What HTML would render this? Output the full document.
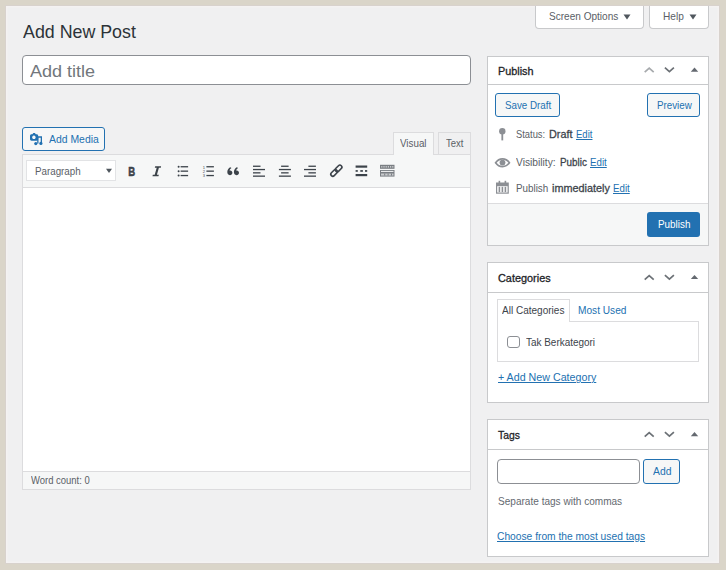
<!DOCTYPE html>
<html><head><meta charset="utf-8"><style>
html,body{margin:0;padding:0;}
body{width:726px;height:570px;position:relative;overflow:hidden;background:#dad5c9;font-family:"Liberation Sans",sans-serif;}
.t{position:absolute;white-space:nowrap;line-height:1;transform-origin:0 0;}
#w{position:absolute;left:0;top:0;width:726px;height:570px;}
</style></head><body><div id="w">
<div style="position:absolute;left:4.5px;top:4.5px;width:715.5px;height:559.5px;background:#f0f0f1;border:1px solid #d8d2cd;box-shadow:inset 0 0 0 1.5px #f4f2f2;box-sizing:border-box;"></div>
<div style="position:absolute;left:535px;top:6px;width:109px;height:23px;background:#fff;border:1px solid #c8c9cb;border-top:none;border-radius:0 0 4px 4px;box-sizing:border-box;"></div>
<div class="t" style="left:548.90px;top:11.00px;font-size:11.2px;color:#5a6066;font-weight:normal;transform:scaleX(0.8987);">Screen Options</div>
<div style="position:absolute;left:649px;top:6px;width:60px;height:23px;background:#fff;border:1px solid #c8c9cb;border-top:none;border-radius:0 0 4px 4px;box-sizing:border-box;"></div>
<div class="t" style="left:663.00px;top:11.00px;font-size:11.2px;color:#5a6066;font-weight:normal;transform:scaleX(0.9037);">Help</div>
<svg style="position:absolute;left:622px;top:13px" width="10" height="8"><path d="M1.5 1.5h7l-3.5 5z" fill="#50575e"/></svg>
<svg style="position:absolute;left:688px;top:13px" width="10" height="8"><path d="M1.5 1.5h7l-3.5 5z" fill="#50575e"/></svg>
<div class="t" style="left:22.50px;top:23.00px;font-size:18.5px;color:#2c3338;font-weight:normal;transform:scaleX(0.9625);">Add New Post</div>
<div style="position:absolute;left:22px;top:55px;width:449px;height:30px;background:#fff;border:1px solid #8c8f94;border-radius:4px;box-sizing:border-box;"></div>
<div class="t" style="left:30.30px;top:63.00px;font-size:17.2px;color:#72777c;font-weight:normal;transform:scaleX(1.0486);">Add title</div>
<div style="position:absolute;left:22px;top:127px;width:83px;height:24px;background:#f6f7f7;border:1px solid #2271b1;border-radius:3px;box-sizing:border-box;"></div>
<svg style="position:absolute;left:0;top:0" width="726" height="570">
<path fill="#2271b1" fill-rule="evenodd" d="M31.6 134.2h.8l.9-1.2h1.6l.9 1.2h.8c.9 0 1.6.7 1.6 1.6v3.3c0 .9-.7 1.6-1.6 1.6h-5c-.9 0-1.6-.7-1.6-1.6v-3.3c0-.9.7-1.6 1.6-1.6zM33.9 135.5a1.75 1.75 0 1 0 .01 0z"/>
<path fill="#2271b1" d="M37.2 136.2h4.8v7.2h-1.3v-5.7h-2.2v5.9h-1.3z"/>
<circle cx="35.8" cy="143.6" r="1.6" fill="#2271b1"/><circle cx="40.9" cy="143.4" r="1.6" fill="#2271b1"/>
</svg>
<div class="t" style="left:48.70px;top:134.00px;font-size:11.2px;color:#2271b1;font-weight:normal;transform:scaleX(0.9311);">Add Media</div>
<div style="position:absolute;left:393px;top:131.5px;width:41px;height:23px;background:#f6f7f7;border:1px solid #dcdcde;border-bottom:none;box-sizing:border-box;"></div>
<div class="t" style="left:400.30px;top:138.00px;font-size:11px;color:#5a6066;font-weight:normal;transform:scaleX(0.8906);">Visual</div>
<div style="position:absolute;left:438px;top:131.5px;width:33px;height:23px;background:#f0f0f1;border:1px solid #dcdcde;box-sizing:border-box;"></div>
<div class="t" style="left:445.80px;top:138.00px;font-size:11px;color:#5a6066;font-weight:normal;transform:scaleX(0.8620);">Text</div>
<div style="position:absolute;left:22px;top:154px;width:449px;height:336px;background:#fff;border:1px solid #dcdcde;box-sizing:border-box;"></div>
<div style="position:absolute;left:23px;top:155px;width:447px;height:32px;background:#f6f7f7;border-bottom:1px solid #dcdcde;"></div>
<div style="position:absolute;left:394px;top:153.5px;width:39px;height:2px;background:#f6f7f7;"></div>
<div style="position:absolute;left:26px;top:160px;width:90px;height:21px;background:#fff;border:1px solid #e2e3e5;box-sizing:border-box;"></div>
<div class="t" style="left:35.00px;top:166.00px;font-size:10.8px;color:#5a6066;font-weight:normal;transform:scaleX(0.9061);">Paragraph</div>
<svg style="position:absolute;left:105px;top:168px" width="8" height="6"><path d="M1 0.8h6l-3 4.2z" fill="#50575e"/></svg>
<div style="position:absolute;left:23px;top:471px;width:447px;height:18px;background:#f6f7f7;border-top:1px solid #dcdcde;box-sizing:border-box;"></div>
<div class="t" style="left:31.30px;top:475.00px;font-size:10.5px;color:#5a6066;font-weight:normal;transform:scaleX(0.9010);">Word count: 0</div>
<svg style="position:absolute;left:0;top:0" width="726" height="570">
<text x="128.2" y="175.9" font-family="Liberation Sans" font-weight="bold" font-size="13.6" textLength="6.9" lengthAdjust="spacingAndGlyphs" fill="#3c434a" stroke="#3c434a" stroke-width="0.55">B</text>
<path d="M155.2 166.2h5.9l-.3 1.5h-1.9l-2 7h1.9l-.3 1.5h-6l.3-1.5h1.9l2-7h-1.9z" fill="#3c434a"/>
<g fill="#3c434a">
<circle cx="178.6" cy="166.8" r="1"/><circle cx="178.6" cy="171.2" r="1"/><circle cx="178.6" cy="175.6" r="1"/>
<rect x="180.6" y="166.1" width="7.5" height="1.3"/><rect x="180.6" y="170.5" width="7.5" height="1.3"/><rect x="180.6" y="174.9" width="7.5" height="1.3"/>
<rect x="206.4" y="166.1" width="7.5" height="1.3"/><rect x="206.4" y="170.5" width="7.5" height="1.3"/><rect x="206.4" y="174.9" width="7.5" height="1.3"/>
</g>
<text x="202.8" y="168.6" font-family="Liberation Sans" font-size="4" fill="#3c434a">1</text>
<text x="202.8" y="173" font-family="Liberation Sans" font-size="4" fill="#3c434a">2</text>
<text x="202.8" y="177.4" font-family="Liberation Sans" font-size="4" fill="#3c434a">3</text>
<path d="M230.2 167.3c-1.6 1-2.9 2.6-2.9 4.8 0 1.8 1 3.1 2.6 3.1 1.4 0 2.5-1 2.5-2.4 0-1.3-.9-2.3-2.2-2.3-.3 0-.5 0-.7.1.3-1 1.1-1.9 2-2.5z M236.8 167.3c-1.6 1-2.9 2.6-2.9 4.8 0 1.8 1 3.1 2.6 3.1 1.4 0 2.5-1 2.5-2.4 0-1.3-.9-2.3-2.2-2.3-.3 0-.5 0-.7.1.3-1 1.1-1.9 2-2.5z" fill="#3c434a"/>
<g fill="#3c434a">
<rect x="253" y="165.6" width="7.5" height="1.3"/><rect x="253" y="168.9" width="12" height="1.3"/><rect x="253" y="172.2" width="7.5" height="1.3"/><rect x="253" y="175.5" width="12" height="1.3"/>
<rect x="281.1" y="165.6" width="7.5" height="1.3"/><rect x="278.9" y="168.9" width="12" height="1.3"/><rect x="281.1" y="172.2" width="7.5" height="1.3"/><rect x="278.9" y="175.5" width="12" height="1.3"/>
<rect x="308.4" y="165.6" width="7.5" height="1.3"/><rect x="304" y="168.9" width="12" height="1.3"/><rect x="308.4" y="172.2" width="7.5" height="1.3"/><rect x="304" y="175.5" width="12" height="1.3"/>
<rect x="355.6" y="165.5" width="11.6" height="2.2"/><rect x="355.6" y="170.1" width="2.2" height="1.7"/><rect x="360.3" y="170.1" width="2.6" height="1.7"/><rect x="365" y="170.1" width="2.2" height="1.7"/><rect x="355.6" y="174" width="11.6" height="2.2"/>
</g>
<g fill="none" stroke="#3c434a" stroke-width="1.6">
<rect x="-3.8" y="-2" width="7.6" height="4" rx="2" transform="translate(334.1 172.9) rotate(-45)"/>
<rect x="-3.8" y="-2" width="7.6" height="4" rx="2" transform="translate(338.6 168.4) rotate(-45)"/>
</g>
<g fill="#7a7e83">
<rect x="380" y="164.8" width="14.5" height="4"/><rect x="380" y="170" width="14.5" height="6.6"/>
</g>
<g fill="#c9cbcd">
<rect x="381.2" y="166" width="1.2" height="1.6"/><rect x="383.4" y="166" width="1.2" height="1.6"/><rect x="385.6" y="166" width="1.2" height="1.6"/><rect x="387.8" y="166" width="1.2" height="1.6"/><rect x="390" y="166" width="1.2" height="1.6"/><rect x="392.2" y="166" width="1.2" height="1.6"/>
<rect x="381" y="173.5" width="12.5" height="2.1"/>
</g>
<rect x="381" y="170.9" width="12.5" height="1" fill="#f6f7f7"/>
<g fill="#7a7e83"><rect x="384.2" y="173.5" width="1" height="2.1"/><rect x="387.6" y="173.5" width="1" height="2.1"/><rect x="391" y="173.5" width="1" height="2.1"/></g>
</svg>
<div style="position:absolute;left:487px;top:56px;width:222px;height:189.5px;background:#fff;border:1px solid #c8c9cb;box-sizing:border-box;"></div>
<div style="position:absolute;left:488px;top:84px;width:220px;height:1px;background:#c8c9cb;"></div>
<div class="t" style="left:498.00px;top:66.00px;font-size:11.2px;color:#1d2327;font-weight:normal;transform:scaleX(0.9691);-webkit-text-stroke:0.3px #1d2327;">Publish</div>
<svg style="position:absolute;left:0;top:0" width="726" height="570">
<path d="M644.7 72.20L649.2 68.20L653.7 72.20" fill="none" stroke="#a7aaad" stroke-width="1.7"/>
<path d="M664.9 67.70L669.4 71.70L673.9 67.70" fill="none" stroke="#6c7176" stroke-width="1.7"/>
<path d="M690.8 71.70L694.5 67.50L698.2 71.70z" fill="#646970"/>
</svg>
<div style="position:absolute;left:495px;top:93px;width:65px;height:24px;background:#f6f7f7;border:1px solid #2271b1;border-radius:3px;box-sizing:border-box;"></div>
<div class="t" style="left:504.70px;top:100.00px;font-size:11.2px;color:#2271b1;font-weight:normal;transform:scaleX(0.8749);">Save Draft</div>
<div style="position:absolute;left:647px;top:93px;width:53px;height:24px;background:#f6f7f7;border:1px solid #2271b1;border-radius:3px;box-sizing:border-box;"></div>
<div class="t" style="left:657.20px;top:100.00px;font-size:11.2px;color:#2271b1;font-weight:normal;transform:scaleX(0.8728);">Preview</div>
<svg style="position:absolute;left:490px;top:125px" width="24" height="72">
<circle cx="12.3" cy="6.3" r="3.2" fill="#8c8f94"/><rect x="11.4" y="8" width="1.8" height="7.4" fill="#8c8f94"/>
<path d="M5.6 37.7c1.7-2.5 4-3.9 6.9-3.9s5.2 1.4 6.9 3.9c-1.7 2.5-4 3.9-6.9 3.9s-5.2-1.4-6.9-3.9z" fill="none" stroke="#8c8f94" stroke-width="1.7"/>
<circle cx="12.5" cy="37.6" r="2.9" fill="#8c8f94"/>
<rect x="6" y="57.5" width="12.8" height="11.2" fill="#8c8f94"/>
<rect x="7.2" y="61.2" width="10.4" height="6.3" fill="#fff"/>
<rect x="8.6" y="61.8" width="1.6" height="5.3" fill="#8c8f94"/><rect x="11.6" y="61.8" width="1.6" height="5.3" fill="#8c8f94"/><rect x="14.6" y="61.8" width="1.6" height="5.3" fill="#8c8f94"/>
<rect x="8.6" y="55.8" width="1.6" height="2.5" fill="#8c8f94"/><rect x="14.6" y="55.8" width="1.6" height="2.5" fill="#8c8f94"/>
</svg>
<div class="t" style="left:516.30px;top:129.00px;font-size:11.2px;color:#5a6066;font-weight:normal;transform:scaleX(0.8370);">Status:</div>
<div class="t" style="left:549.20px;top:129.00px;font-size:11.2px;color:#3c434a;font-weight:normal;transform:scaleX(0.9692);-webkit-text-stroke:0.3px #3c434a;">Draft</div>
<div class="t" style="left:575.80px;top:129.00px;font-size:11.2px;color:#2271b1;font-weight:normal;transform:scaleX(0.8540);text-decoration:underline;text-underline-offset:0.6px;text-decoration-thickness:1px;">Edit</div>
<div class="t" style="left:516.10px;top:157.00px;font-size:11.2px;color:#5a6066;font-weight:normal;transform:scaleX(0.9159);">Visibility:</div>
<div class="t" style="left:559.50px;top:157.00px;font-size:11.2px;color:#3c434a;font-weight:normal;transform:scaleX(0.8814);-webkit-text-stroke:0.3px #3c434a;">Public</div>
<div class="t" style="left:590.20px;top:157.00px;font-size:11.2px;color:#2271b1;font-weight:normal;transform:scaleX(0.8696);text-decoration:underline;text-underline-offset:0.6px;text-decoration-thickness:1px;">Edit</div>
<div class="t" style="left:516.10px;top:183.00px;font-size:11.2px;color:#5a6066;font-weight:normal;transform:scaleX(0.8792);">Publish</div>
<div class="t" style="left:552.10px;top:183.00px;font-size:11.2px;color:#3c434a;font-weight:normal;transform:scaleX(0.9690);-webkit-text-stroke:0.3px #3c434a;">immediately</div>
<div class="t" style="left:612.70px;top:183.00px;font-size:11.2px;color:#2271b1;font-weight:normal;transform:scaleX(0.8696);text-decoration:underline;text-underline-offset:0.6px;text-decoration-thickness:1px;">Edit</div>
<div style="position:absolute;left:488px;top:203px;width:220px;height:41.5px;background:#f6f7f7;border-top:1px solid #dcdcde;box-sizing:border-box;"></div>
<div style="position:absolute;left:646.5px;top:212px;width:53.5px;height:25px;background:#2271b1;border-radius:3px;"></div>
<div class="t" style="left:657.60px;top:219.00px;font-size:11.2px;color:#fff;font-weight:normal;transform:scaleX(0.8820);">Publish</div>
<div style="position:absolute;left:487px;top:262px;width:222px;height:141px;background:#fff;border:1px solid #c8c9cb;box-sizing:border-box;"></div>
<div style="position:absolute;left:488px;top:292px;width:220px;height:1px;background:#c8c9cb;"></div>
<div class="t" style="left:497.70px;top:273.00px;font-size:11.2px;color:#1d2327;font-weight:normal;transform:scaleX(0.9732);-webkit-text-stroke:0.3px #1d2327;">Categories</div>
<svg style="position:absolute;left:0;top:0" width="726" height="570">
<path d="M644.7 279.60L649.2 275.60L653.7 279.60" fill="none" stroke="#6c7176" stroke-width="1.7"/>
<path d="M664.9 275.10L669.4 279.10L673.9 275.10" fill="none" stroke="#6c7176" stroke-width="1.7"/>
<path d="M690.8 279.10L694.5 274.90L698.2 279.10z" fill="#646970"/>
</svg>
<div style="position:absolute;left:497px;top:321px;width:201.5px;height:40.5px;background:#fff;border:1px solid #dcdcde;box-sizing:border-box;"></div>
<div style="position:absolute;left:497px;top:299px;width:72.5px;height:23px;background:#fff;border:1px solid #dcdcde;border-bottom:none;box-sizing:border-box;"></div>
<div class="t" style="left:502.20px;top:305.00px;font-size:11.2px;color:#3c434a;font-weight:normal;transform:scaleX(0.8964);">All Categories</div>
<div class="t" style="left:577.60px;top:305.00px;font-size:11.2px;color:#2271b1;font-weight:normal;transform:scaleX(0.9059);">Most Used</div>
<div style="position:absolute;left:507px;top:336px;width:13px;height:12px;background:#fff;border:1px solid #8c8f94;border-radius:3px;box-sizing:border-box;"></div>
<div class="t" style="left:526.40px;top:337.00px;font-size:11px;color:#3c434a;font-weight:normal;transform:scaleX(0.9039);">Tak Berkategori</div>
<div class="t" style="left:497.60px;top:372.00px;font-size:11.2px;color:#2271b1;font-weight:normal;transform:scaleX(0.9550);text-decoration:underline;text-underline-offset:0.6px;text-decoration-thickness:1px;">+ Add New Category</div>
<div style="position:absolute;left:487px;top:419px;width:222px;height:137.5px;background:#fff;border:1px solid #c8c9cb;box-sizing:border-box;"></div>
<div style="position:absolute;left:488px;top:448.5px;width:220px;height:1px;background:#c8c9cb;"></div>
<div class="t" style="left:497.60px;top:430.00px;font-size:11.2px;color:#1d2327;font-weight:normal;transform:scaleX(0.9309);-webkit-text-stroke:0.3px #1d2327;">Tags</div>
<svg style="position:absolute;left:0;top:0" width="726" height="570">
<path d="M644.7 436.70L649.2 432.70L653.7 436.70" fill="none" stroke="#6c7176" stroke-width="1.7"/>
<path d="M664.9 432.20L669.4 436.20L673.9 432.20" fill="none" stroke="#6c7176" stroke-width="1.7"/>
<path d="M690.8 436.20L694.5 432.00L698.2 436.20z" fill="#646970"/>
</svg>
<div style="position:absolute;left:497.4px;top:459px;width:143px;height:24.5px;background:#fff;border:1px solid #8c8f94;border-radius:4px;box-sizing:border-box;"></div>
<div style="position:absolute;left:643.4px;top:459px;width:37px;height:24.5px;background:#f6f7f7;border:1px solid #2271b1;border-radius:3px;box-sizing:border-box;"></div>
<div class="t" style="left:652.50px;top:466.00px;font-size:11.2px;color:#2271b1;font-weight:normal;transform:scaleX(0.9280);">Add</div>
<div class="t" style="left:497.90px;top:496.00px;font-size:11.2px;color:#646970;font-weight:normal;transform:scaleX(0.8994);">Separate tags with commas</div>
<div class="t" style="left:497.40px;top:531.00px;font-size:11.2px;color:#2271b1;font-weight:normal;transform:scaleX(0.9157);text-decoration:underline;text-underline-offset:0.6px;text-decoration-thickness:1px;">Choose from the most used tags</div>
</div></body></html>
